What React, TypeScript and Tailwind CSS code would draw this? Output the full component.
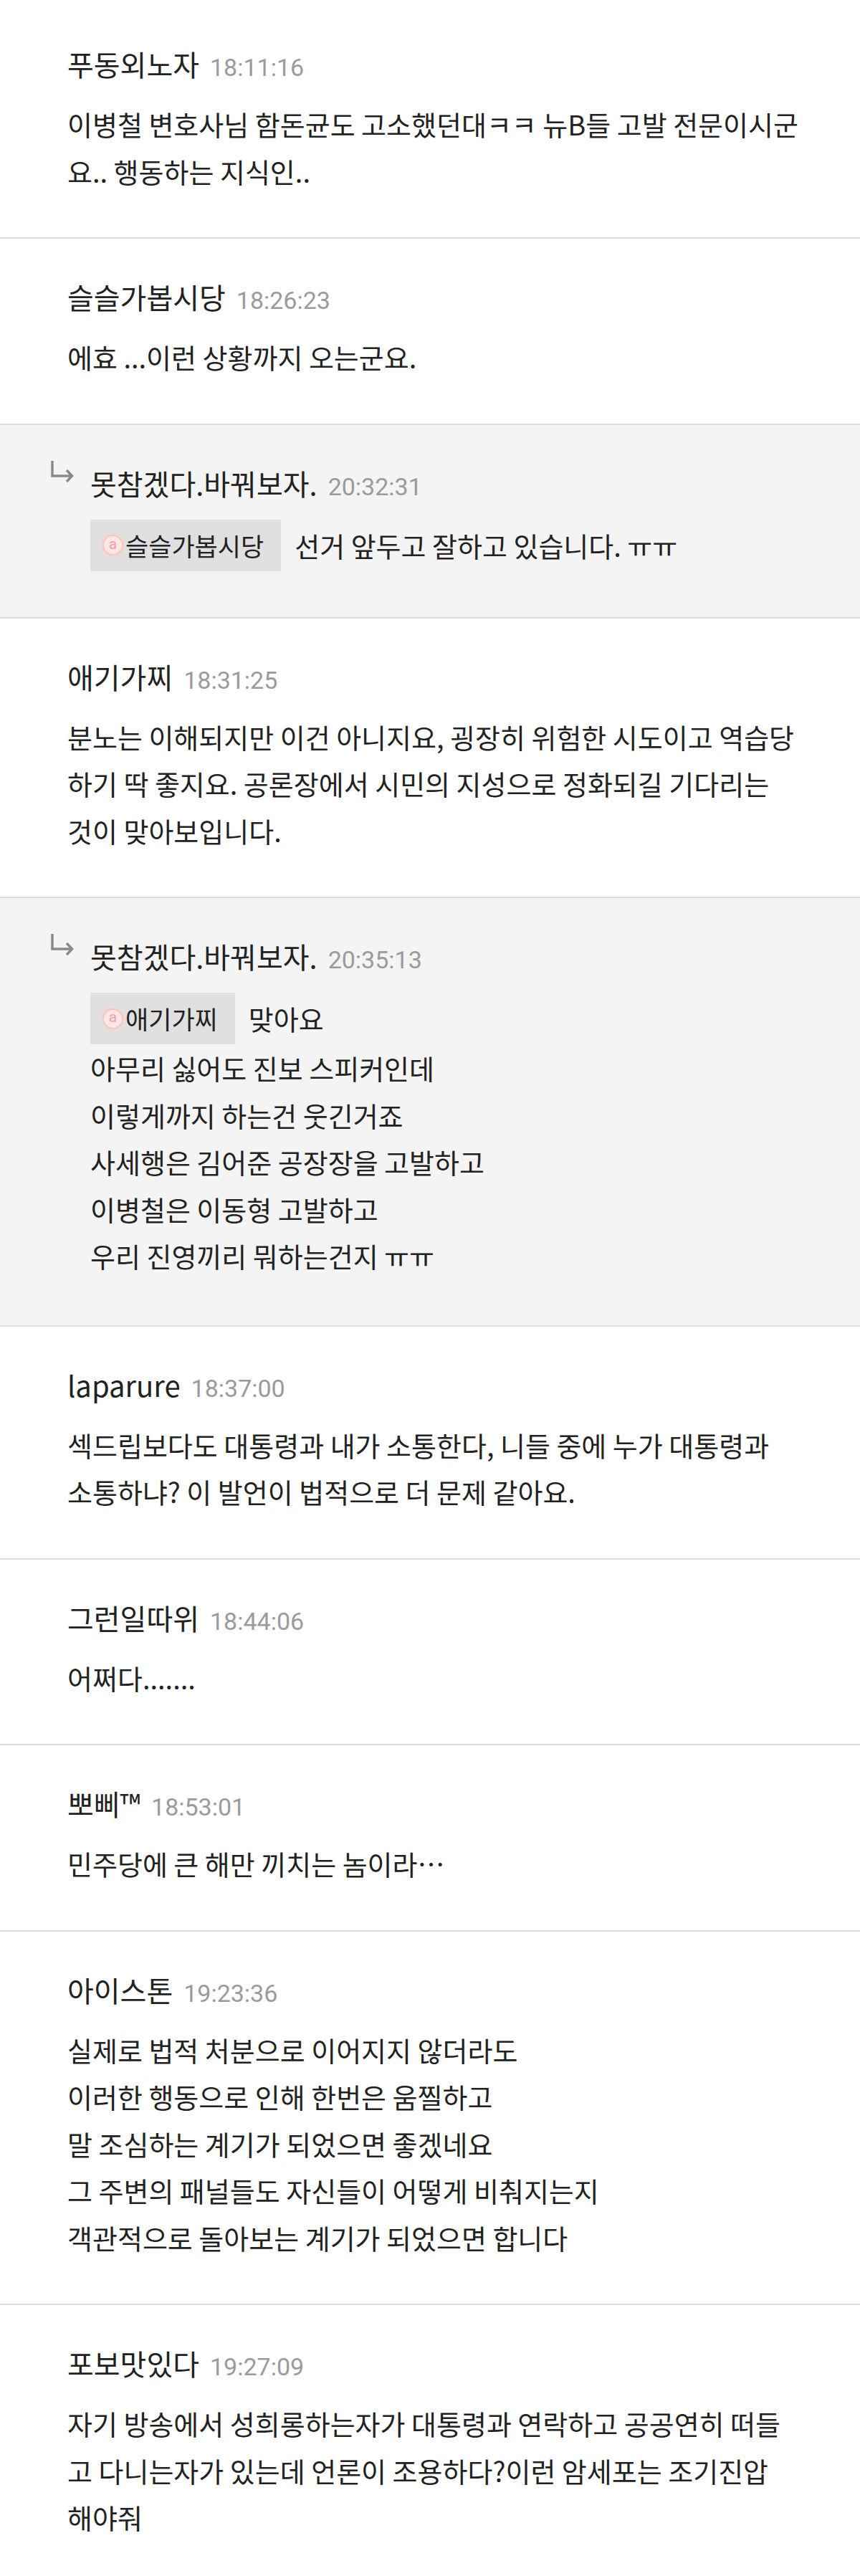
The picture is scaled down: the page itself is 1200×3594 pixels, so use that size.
import React from 'react';

type Comment = {
  name: string;
  time: string;
  lines: string[];
  reply?: boolean;
  mention?: string;
  mentionText?: string;
};

const comments: Comment[] = [
  {
    name: '푸동외노자',
    time: '18:11:16',
    lines: ['이병철 변호사님 함돈균도 고소했던대ㅋㅋ 뉴B들 고발 전문이시군', '요.. 행동하는 지식인..'],
  },
  { name: '슬슬가봅시당', time: '18:26:23', lines: ['에효 ...이런 상황까지 오는군요.'] },
  {
    name: '못참겠다.바꿔보자.',
    time: '20:32:31',
    reply: true,
    mention: '슬슬가봅시당',
    mentionText: '선거 앞두고 잘하고 있습니다. ㅠㅠ',
    lines: [],
  },
  {
    name: '애기가찌',
    time: '18:31:25',
    lines: [
      '분노는 이해되지만 이건 아니지요, 굉장히 위험한 시도이고 역습당',
      '하기 딱 좋지요. 공론장에서 시민의 지성으로 정화되길 기다리는',
      '것이 맞아보입니다.',
    ],
  },
  {
    name: '못참겠다.바꿔보자.',
    time: '20:35:13',
    reply: true,
    mention: '애기가찌',
    mentionText: '맞아요',
    lines: [
      '아무리 싫어도 진보 스피커인데',
      '이렇게까지 하는건 웃긴거죠',
      '사세행은 김어준 공장장을 고발하고',
      '이병철은 이동형 고발하고',
      '우리 진영끼리 뭐하는건지 ㅠㅠ',
    ],
  },
  {
    name: 'laparure',
    time: '18:37:00',
    lines: ['섹드립보다도 대통령과 내가 소통한다, 니들 중에 누가 대통령과', '소통하냐? 이 발언이 법적으로 더 문제 같아요.'],
  },
  { name: '그런일따위', time: '18:44:06', lines: ['어쩌다.......'] },
  { name: '뽀삐™', time: '18:53:01', lines: ['민주당에 큰 해만 끼치는 놈이라…'] },
  {
    name: '아이스톤',
    time: '19:23:36',
    lines: [
      '실제로 법적 처분으로 이어지지 않더라도',
      '이러한 행동으로 인해 한번은 움찔하고',
      '말 조심하는 계기가 되었으면 좋겠네요',
      '그 주변의 패널들도 자신들이 어떻게 비춰지는지',
      '객관적으로 돌아보는 계기가 되었으면 합니다',
    ],
  },
  {
    name: '포보맛있다',
    time: '19:27:09',
    lines: [
      '자기 방송에서 성희롱하는자가 대통령과 연락하고 공공연히 떠들',
      '고 다니는자가 있는데 언론이 조용하다?이런 암세포는 조기진압',
      '해야줘',
    ],
  },
];

function ReplyArrow() {
  return (
    <svg width="34" height="36" viewBox="0 0 34 36" className="-mt-[8px]" fill="none">
      <path d="M3 2 V23 H30" stroke="#8a8a8a" strokeWidth="3.5" />
      <path d="M23 15 L30.5 23 L23 31" stroke="#8a8a8a" strokeWidth="3.5" strokeLinejoin="miter" />
    </svg>
  );
}

function Header({ name, time }: { name: string; time: string }) {
  return (
    <div className="flex items-baseline gap-[15px] leading-[50px]">
      <span className="text-[40px] text-[#222]">{name}</span>
      <span className="font-['Roboto',sans-serif] text-[34px] text-[#9b9b9b]">{time}</span>
    </div>
  );
}

function Mention({ user }: { user: string }) {
  return (
    <span className="flex h-[72px] items-center bg-[#e0e0e0] pl-[17px] pr-[24px]">
      <span className="mr-[3px] flex h-[29px] w-[29px] items-center justify-center rounded-full border-2 border-[#f8c6b6] bg-[#fde6e6] pb-[3px] font-['Roboto',sans-serif] text-[21px] leading-none text-[#f19fb0] shadow-[0_0_4px_#fbd0c4]">
        a
      </span>
      <span className="text-[35px] text-[#222]">{user}</span>
    </span>
  );
}

function CommentItem({ c, first }: { c: Comment; first: boolean }) {
  if (c.reply) {
    return (
      <div className="flex border-b-2 border-[#dcdcdc] bg-[#f4f4f4] pb-[64px] pl-[70px] pr-[20px] pt-[56px]">
        <div className="w-[56px] shrink-0">
          <ReplyArrow />
        </div>
        <div className="flex-1">
          <Header name={c.name} time={c.time} />
          <div className="mt-[21px] text-[38px] leading-[65.5px] text-[#222]">
            <div className="flex h-[72px] items-center gap-[19px]">
              <Mention user={c.mention ?? ''} />
              <span>{c.mentionText}</span>
            </div>
            {c.lines.map((l, i) => (
              <div key={i} className="whitespace-nowrap">
                {l}
              </div>
            ))}
          </div>
        </div>
      </div>
    );
  }
  return (
    <div
      className={
        first
          ? 'border-b-2 border-[#dcdcdc] bg-white pb-[60px] pl-[94px] pr-[20px] pt-[64px]'
          : 'border-b-2 border-[#dcdcdc] bg-white pb-[60px] pl-[94px] pr-[20px] pt-[56px]'
      }
    >
      <Header name={c.name} time={c.time} />
      <div className="mt-[21px] text-[38px] leading-[65.5px] text-[#222]">
        {c.lines.map((l, i) => (
          <div key={i} className="whitespace-nowrap">
            {l}
          </div>
        ))}
      </div>
    </div>
  );
}

export default function App() {
  return (
    <div className="min-h-screen w-[1200px] bg-white font-['Noto_Sans_CJK_KR',sans-serif]">
      {comments.map((c, i) => (
        <CommentItem key={i} c={c} first={i === 0} />
      ))}
    </div>
  );
}
